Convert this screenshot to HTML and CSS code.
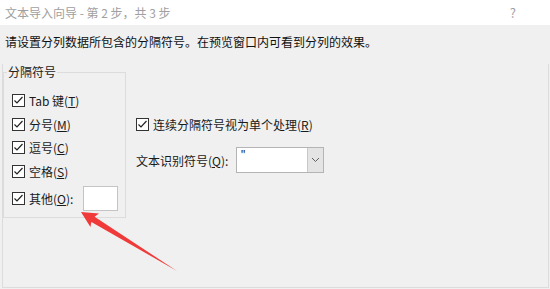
FILE: index.html
```html
<!DOCTYPE html>
<html lang="zh-CN">
<head>
    <meta charset="UTF-8">
    <title>文本导入向导</title>
    <link rel="stylesheet" href="styles.css">
</head>
<body>
    <div class="titlebar">
        <span class="title">文本导入向导 - 第 2 步，共 3 步</span>
        <span class="help">?</span>
    </div>

    <div class="main">
        <p class="hint">请设置分列数据所包含的分隔符号。在预览窗口内可看到分列的效果。</p>

        <div class="panel">
            <fieldset class="delims">
                <legend>分隔符号</legend>
                <label class="row">
                    <svg class="check" viewBox="0 0 13 13"><rect x="0.5" y="0.5" width="12" height="12"/><polyline points="2.5,6.5 5,9 10.5,3"/></svg>
                    Tab 键(<u>T</u>)
                </label>
                <label class="row">
                    <svg class="check" viewBox="0 0 13 13"><rect x="0.5" y="0.5" width="12" height="12"/><polyline points="2.5,6.5 5,9 10.5,3"/></svg>
                    分号(<u>M</u>)
                </label>
                <label class="row">
                    <svg class="check" viewBox="0 0 13 13"><rect x="0.5" y="0.5" width="12" height="12"/><polyline points="2.5,6.5 5,9 10.5,3"/></svg>
                    逗号(<u>C</u>)
                </label>
                <label class="row">
                    <svg class="check" viewBox="0 0 13 13"><rect x="0.5" y="0.5" width="12" height="12"/><polyline points="2.5,6.5 5,9 10.5,3"/></svg>
                    空格(<u>S</u>)
                </label>
                <div class="row other">
                    <svg class="check" viewBox="0 0 13 13"><rect x="0.5" y="0.5" width="12" height="12"/><polyline points="2.5,6.5 5,9 10.5,3"/></svg>
                    其他(<u>O</u>):
                    <span class="other-input"></span>
                </div>
            </fieldset>

            <div class="options">
                <label class="row">
                    <svg class="check" viewBox="0 0 13 13"><rect x="0.5" y="0.5" width="12" height="12"/><polyline points="2.5,6.5 5,9 10.5,3"/></svg>
                    连续分隔符号视为单个处理(<u>R</u>)
                </label>
                <div class="qualifier">
                    <span>文本识别符号(<u>Q</u>):</span>
                    <div class="combo">
                        <span class="combo-value">"</span>
                        <span class="combo-btn">
                            <svg viewBox="0 0 9 6"><polyline points="1,1 4.5,4.5 8,1"/></svg>
                        </span>
                    </div>
                </div>
            </div>
        </div>
    </div>

    <!-- annotation arrow -->
    <svg class="annot" viewBox="0 0 550 289">
        <polygon points="81,212 99,213.5 94.6,216.8 177,271 91.4,222 90.4,227"/>
    </svg>
</body>
</html>
```

FILE: styles.css
```css
* {
    margin: 0;
    padding: 0;
    box-sizing: border-box;
}

body {
    width: 550px;
    height: 289px;
    overflow: hidden;
    position: relative;
    font-family: "Noto Sans CJK SC", "Noto Sans", sans-serif;
    font-size: 12px;
    color: #1a1a1a;
    background: #f0f0f0;
}

.titlebar {
    height: 25px;
    background: #ffffff;
    display: flex;
    align-items: center;
    justify-content: space-between;
    padding: 0 34px 0 5px;
    color: #a0a0a0;
    line-height: 16px;
}

.help {
    font-size: 13px;
}

.main {
    height: 264px;
    background: #f0f0f0;
}

.hint {
    padding: 9px 0 0 5px;
    line-height: 16px;
    height: 39px;
    color: #111;
}

.panel {
    margin-left: 2px;
    width: 547px;
    height: 224px;
    border-left: 1px solid #dcdcdc;
    border-right: 1px solid #dcdcdc;
    border-bottom: 1px solid #dcdcdc;
    display: flex;
    align-items: flex-start;
}

.delims {
    width: 123px;
    border: 1px solid #dcdcdc;
    padding: 9px 0 6px 3px;
    min-inline-size: 0;
}

.delims legend {
    padding: 0 1px;
    line-height: 16px;
    color: #222;
}

.row {
    display: flex;
    align-items: center;
    height: 23.5px;
    margin-left: 5px;
    white-space: nowrap;
}

.check {
    width: 13px;
    height: 13px;
    margin-right: 4px;
    flex-shrink: 0;
}

.check rect {
    fill: #ffffff;
    stroke: #333333;
    stroke-width: 1;
}

.check polyline {
    fill: none;
    stroke: #222222;
    stroke-width: 1.2;
}

.row.other {
    height: 25px;
    margin-top: 3px;
}

.other-input {
    width: 35px;
    height: 25px;
    margin-left: 10px;
    background: #ffffff;
    border: 1px solid #c4c4c4;
}

.options {
    margin-left: 10px;
    padding-top: 49px;
}

.options .row {
    margin-left: 0;
    height: 23px;
}

.qualifier {
    display: flex;
    align-items: center;
    margin-top: 11px;
    white-space: nowrap;
}

.combo {
    display: flex;
    width: 88px;
    height: 26px;
    margin-left: 8px;
    border: 1px solid #b4b4b4;
    background: #ffffff;
}

.combo-value {
    flex: 1;
    padding: 1px 0 0 3px;
    line-height: 12px;
    font-size: 11px;
}

.combo-btn {
    width: 16px;
    background: #e4e4e4;
    border-left: 1px solid #c8c8c8;
    display: flex;
    align-items: center;
    justify-content: center;
}

.combo-btn svg {
    width: 9px;
    height: 6px;
}

.combo-btn polyline {
    fill: none;
    stroke: #606060;
    stroke-width: 1;
}

.annot {
    position: absolute;
    top: 0;
    left: 0;
    width: 550px;
    height: 289px;
    pointer-events: none;
}

.annot polygon {
    fill: #f03a3a;
}
```
